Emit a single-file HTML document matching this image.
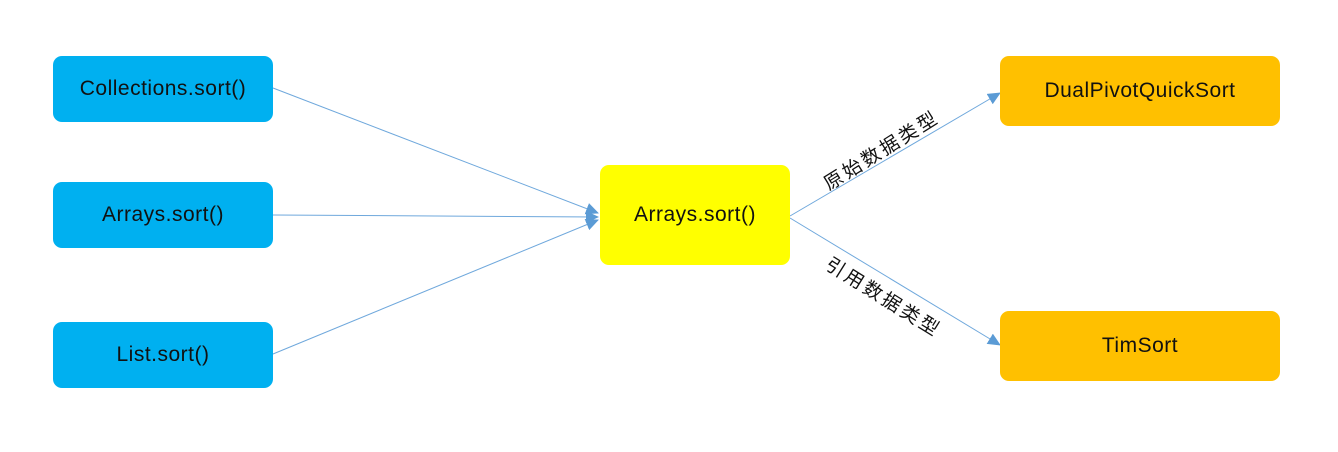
<!DOCTYPE html>
<html><head><meta charset="utf-8"><style>
body{margin:0;width:1338px;height:452px;background:#fff;overflow:hidden;position:relative;font-family:"Liberation Sans","Noto Sans CJK SC",sans-serif}
.b{position:absolute;border-radius:9px;display:flex;align-items:center;justify-content:center;font-size:21px;color:#111;letter-spacing:0.5px}
.bl{background:#00b0f0}.y{background:#ffff00}.o{background:#ffc000}
.lb{position:absolute;font-size:19px;color:#111;white-space:nowrap;letter-spacing:3px}
</style></head><body>
<svg width="1338" height="452" style="position:absolute;left:0;top:0">
<defs><marker id="a" markerWidth="13" markerHeight="12" refX="12" refY="6" orient="auto" markerUnits="userSpaceOnUse"><path d="M0,0 L13,6 L0,12 Z" fill="#5b9bd5"/></marker></defs>
<g stroke="#6fa8dc" stroke-width="1" fill="none">
<line x1="273" y1="88" x2="598" y2="213" marker-end="url(#a)"/>
<line x1="273" y1="215" x2="598" y2="217" marker-end="url(#a)"/>
<line x1="273" y1="354" x2="598" y2="220" marker-end="url(#a)"/>
<line x1="790" y1="216" x2="1000" y2="93" marker-end="url(#a)"/>
<line x1="790" y1="218" x2="1000" y2="345" marker-end="url(#a)"/>
</g></svg>
<div class="b bl" style="left:53px;top:56px;width:220px;height:66px">Collections.sort()</div>
<div class="b bl" style="left:53px;top:182px;width:220px;height:66px">Arrays.sort()</div>
<div class="b bl" style="left:53px;top:322px;width:220px;height:66px">List.sort()</div>
<div class="b y" style="left:600px;top:165px;width:190px;height:100px">Arrays.sort()</div>
<div class="b o" style="left:1000px;top:56px;width:280px;height:70px">DualPivotQuickSort</div>
<div class="b o" style="left:1000px;top:311px;width:280px;height:70px">TimSort</div>
<div class="lb" style="left:815px;top:136px;transform:rotate(-32deg)">原始数据类型</div>
<div class="lb" style="left:818px;top:283px;transform:rotate(32deg)">引用数据类型</div>
</body></html>
